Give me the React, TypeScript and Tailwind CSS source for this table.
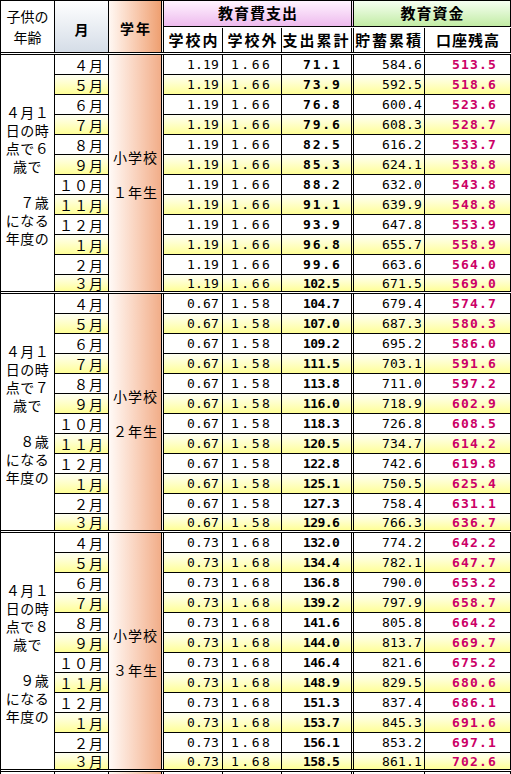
import type { ReactElement } from 'react';

type Section = {
  age: string[];
  grade: string;
  inSchool: string;
  outSchool: string;
  total: string[];
  saved: string[];
  balance: string[];
};

const months = ['４月', '５月', '６月', '７月', '８月', '９月', '１０月', '１１月', '１２月', '１月', '２月', '３月'];

const sections: Section[] = [
  {
    age: ['４月１', '日の時', '点で６', '歳で', '', '\u3000７歳', 'になる', '年度の'],
    grade: '１年生',
    inSchool: '1.19',
    outSchool: '1.66',
    total: ['71.1', '73.9', '76.8', '79.6', '82.5', '85.3', '88.2', '91.1', '93.9', '96.8', '99.6', '102.5'],
    saved: ['584.6', '592.5', '600.4', '608.3', '616.2', '624.1', '632.0', '639.9', '647.8', '655.7', '663.6', '671.5'],
    balance: ['513.5', '518.6', '523.6', '528.7', '533.7', '538.8', '543.8', '548.8', '553.9', '558.9', '564.0', '569.0'],
  },
  {
    age: ['４月１', '日の時', '点で７', '歳で', '', '\u3000８歳', 'になる', '年度の'],
    grade: '２年生',
    inSchool: '0.67',
    outSchool: '1.58',
    total: ['104.7', '107.0', '109.2', '111.5', '113.8', '116.0', '118.3', '120.5', '122.8', '125.1', '127.3', '129.6'],
    saved: ['679.4', '687.3', '695.2', '703.1', '711.0', '718.9', '726.8', '734.7', '742.6', '750.5', '758.4', '766.3'],
    balance: ['574.7', '580.3', '586.0', '591.6', '597.2', '602.9', '608.5', '614.2', '619.8', '625.4', '631.1', '636.7'],
  },
  {
    age: ['４月１', '日の時', '点で８', '歳で', '', '\u3000９歳', 'になる', '年度の'],
    grade: '３年生',
    inSchool: '0.73',
    outSchool: '1.68',
    total: ['132.0', '134.4', '136.8', '139.2', '141.6', '144.0', '146.4', '148.9', '151.3', '153.7', '156.1', '158.5'],
    saved: ['774.2', '782.1', '790.0', '797.9', '805.8', '813.7', '821.6', '829.5', '837.4', '845.3', '853.2', '861.1'],
    balance: ['642.2', '647.7', '653.2', '658.7', '664.2', '669.7', '675.2', '680.6', '686.1', '691.6', '697.1', '702.6'],
  },
];

const yellow = 'bg-linear-to-b from-[#fffff2] to-[#ffff96]';

// spreads the characters over the cell like Excel's distributed alignment
function Spread({ text }: { text: string }): ReactElement {
  return (
    <div className="flex w-full justify-between">
      {[...text].map((c, i) => (
        <span key={i} className="w-[7px] text-center">
          {c}
        </span>
      ))}
    </div>
  );
}

function NumberRow({
  section,
  index,
}: {
  section: Section;
  index: number;
}): ReactElement {
  const last = index === 11;
  const striped = index % 2 === 1;

  return (
    <div
      className={`flex font-['DejaVu_Sans_Mono',monospace] text-[13px] leading-none ${
        last ? 'h-[16px]' : 'h-[20px] border-b border-black'
      } ${striped ? yellow : 'bg-white'}`}
    >
      <div className="flex w-[59px] items-center border-r border-black pl-[23px] pr-[4px]">
        <Spread text={section.inSchool} />
      </div>
      <div className="flex w-[59px] items-center border-r border-black pl-[8px] pr-[12px]">
        <Spread text={section.outSchool} />
      </div>
      <div className="flex w-[72px] items-center border-r-[3px] border-double border-black pl-[21px] pr-[12px] font-bold">
        <Spread text={section.total[index]} />
      </div>
      <div className="flex w-[71px] items-center border-r border-black pl-[28px] pr-[3px]">
        <Spread text={section.saved[index]} />
      </div>
      <div className="flex w-[86px] items-center border-r border-black pl-[27px] pr-[15px] font-bold text-[#cc0066]">
        <Spread text={section.balance[index]} />
      </div>
    </div>
  );
}

function SectionBlock({ section }: { section: Section }): ReactElement {
  return (
    <div className="flex h-[239px] border-b-[3px] border-double border-black">
      <div className="flex w-[54px] flex-col items-center justify-center border-r border-black pt-[4px] text-[14px] tracking-[0.5px]">
        {section.age.map((line, i) => (
          <div key={i} className="h-[18px] whitespace-pre leading-[18px]">
            {line}
          </div>
        ))}
      </div>

      <div className="flex w-[54px] flex-col">
        {months.map((month, i) => (
          <div
            key={month}
            className={`flex items-center justify-end border-r border-black pr-[4px] text-[14px] leading-none tracking-[1px] ${
              i === 11 ? 'h-[16px]' : 'h-[20px] border-b'
            } ${i % 2 === 1 ? yellow : 'bg-white'}`}
          >
            {month}
          </div>
        ))}
      </div>

      <div className="flex w-[55px] flex-col items-center justify-center gap-[17px] border-r-[3px] border-double border-black bg-linear-to-r from-[#fffaf7] to-[#f1ad88] pl-[1px] pt-[2px] text-[14px] leading-[18px] tracking-[1px]">
        <div>小学校</div>
        <div>{section.grade}</div>
      </div>

      <div className="flex flex-col">
        {months.map((month, i) => (
          <NumberRow key={month} section={section} index={i} />
        ))}
      </div>
    </div>
  );
}

function Header(): ReactElement {
  return (
    <div className="flex h-[54px] border-b-[3px] border-double border-black">
      <div className="flex w-[54px] flex-col items-center justify-center border-r border-black pt-[1px] text-[14px] leading-[21px]">
        <div>子供の</div>
        <div>年齢</div>
      </div>
      <div className="flex w-[54px] items-center justify-center border-r border-black bg-linear-to-b from-white to-[#d5dde7] pt-[5px] text-[14px] font-bold">
        月
      </div>
      <div className="flex w-[55px] items-center justify-center border-r-[3px] border-double border-black bg-linear-to-r from-[#fff8f3] to-[#ee9f70] pl-[2px] pt-[4px] text-[14px] font-bold tracking-[2px]">
        学年
      </div>
      <div className="flex flex-col">
        <div className="flex h-[26px] border-b border-black">
          <div className="flex w-[190px] items-center justify-center border-r-[3px] border-double border-black bg-linear-to-b from-[#fff4ff] to-[#edbaed] pl-[1px] text-[15px] font-bold tracking-[1px]">
            教育費支出
          </div>
          <div className="flex w-[157px] items-center justify-center border-r border-black bg-linear-to-b from-[#f6fff2] to-[#c2eca4] pl-[1px] text-[15px] font-bold tracking-[1px]">
            教育資金
          </div>
        </div>
        <div className="flex h-[25px] whitespace-nowrap pt-[1px] text-[15px] font-bold">
          <div className="flex w-[59px] items-center justify-center border-r border-black pl-[2px] tracking-[2px]">
            学校内
          </div>
          <div className="flex w-[59px] items-center justify-center border-r border-black pl-[2px] tracking-[2px]">
            学校外
          </div>
          <div className="flex w-[72px] items-center justify-center border-r-[3px] border-double border-black tracking-[2px]">
            支出累計
          </div>
          <div className="flex w-[71px] items-center justify-center border-r border-black tracking-[2px]">
            貯蓄累積
          </div>
          <div className="flex w-[86px] items-center justify-center border-r border-black pl-[1px] tracking-[1px]">
            口座残高
          </div>
        </div>
      </div>
    </div>
  );
}

export default function App(): ReactElement {
  return (
    <div className="h-[774px] w-[511px] overflow-hidden bg-white">
      <div className="w-[511px] border-l border-t border-black bg-white font-['Noto_Sans_CJK_JP',sans-serif] text-black">
        <Header />
        {sections.map((section) => (
          <SectionBlock key={section.grade} section={section} />
        ))}
        <div className="flex h-[12px]">
          <div className="w-[54px] border-r border-black" />
          <div className="w-[54px] border-r border-black" />
          <div className="w-[55px] border-r-[3px] border-double border-black bg-linear-to-r from-[#fffaf7] to-[#f1ad88]" />
          <div className="w-[59px] border-r border-black" />
          <div className="w-[59px] border-r border-black" />
          <div className="w-[72px] border-r-[3px] border-double border-black" />
          <div className="w-[71px] border-r border-black" />
          <div className="w-[86px] border-r border-black" />
        </div>
      </div>
    </div>
  );
}
